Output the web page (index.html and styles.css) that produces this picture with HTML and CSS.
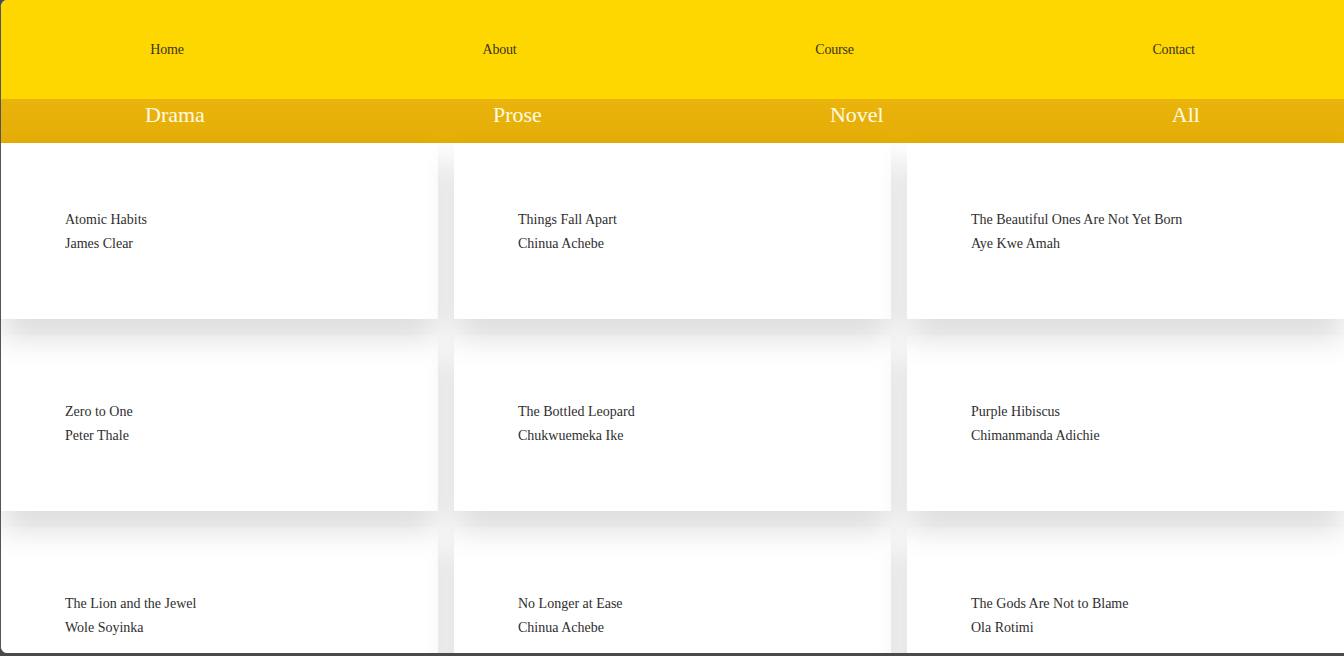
FILE: index.html
```html
<!DOCTYPE html>
<html>
<head>
<meta charset="utf-8">
<link rel="stylesheet" href="styles.css">
</head>
<body>
<div class="frame">
  <header class="topnav">
    <a class="nav-link">Home</a>
    <a class="nav-link">About</a>
    <a class="nav-link">Course</a>
    <a class="nav-link">Contact</a>
  </header>
  <nav class="genres">
    <a class="genre">Drama</a>
    <a class="genre">Prose</a>
    <a class="genre">Novel</a>
    <a class="genre">All</a>
  </nav>
  <main class="grid">
    <div class="card row1"><p class="title">Atomic Habits</p><p class="author">James Clear</p></div>
    <div class="card row1"><p class="title">Things Fall Apart</p><p class="author">Chinua Achebe</p></div>
    <div class="card row1"><p class="title">The Beautiful Ones Are Not Yet Born</p><p class="author">Aye Kwe Amah</p></div>
    <div class="card row2"><p class="title">Zero to One</p><p class="author">Peter Thale</p></div>
    <div class="card row2"><p class="title">The Bottled Leopard</p><p class="author">Chukwuemeka Ike</p></div>
    <div class="card row2"><p class="title">Purple Hibiscus</p><p class="author">Chimanmanda Adichie</p></div>
    <div class="card row3"><p class="title">The Lion and the Jewel</p><p class="author">Wole Soyinka</p></div>
    <div class="card row3"><p class="title">No Longer at Ease</p><p class="author">Chinua Achebe</p></div>
    <div class="card row3"><p class="title">The Gods Are Not to Blame</p><p class="author">Ola Rotimi</p></div>
  </main>
</div>
</body>
</html>
```

FILE: styles.css
```css
html, body {
  margin: 0;
  padding: 0;
  background: #4a4a4a;
}
body {
  font-family: "Liberation Serif", "Times New Roman", serif;
  overflow: hidden;
}
.frame {
  height: 653px;
  background: #ffffff;
  border-left: 1px solid #555555;
  border-radius: 7px 0 0 7px;
  overflow: hidden;
  box-sizing: border-box;
}
.topnav {
  height: 99px;
  background: #ffd700;
  display: flex;
  justify-content: space-around;
  align-items: center;
  padding-top: 1px;
  box-sizing: border-box;
}
.nav-link {
  font-size: 14px;
  color: #3a3520;
  letter-spacing: -0.2px;
}
.genres {
  height: 44px;
  background: linear-gradient(#e9b40b, #e6ad08);
  display: flex;
  justify-content: space-around;
  align-items: flex-start;
  padding-top: 2px;
  box-sizing: border-box;
}
.genre {
  font-size: 22px;
  line-height: 27px;
  color: #fffbe6;
}
.grid {
  display: grid;
  grid-template-columns: repeat(3, 1fr);
  grid-auto-rows: 176px;
  gap: 16px;
}
.card {
  position: relative;
  background: #ffffff;
  box-shadow: 0 18px 30px rgba(0, 0, 0, 0.14);
  padding: 65px 64px 0;
  box-sizing: border-box;
}
.row1 { z-index: 3; }
.row2 { z-index: 2; }
.row3 { z-index: 1; }
.card p {
  margin: 0;
  font-size: 14px;
  line-height: 24px;
  color: #2e2e2e;
}
```
